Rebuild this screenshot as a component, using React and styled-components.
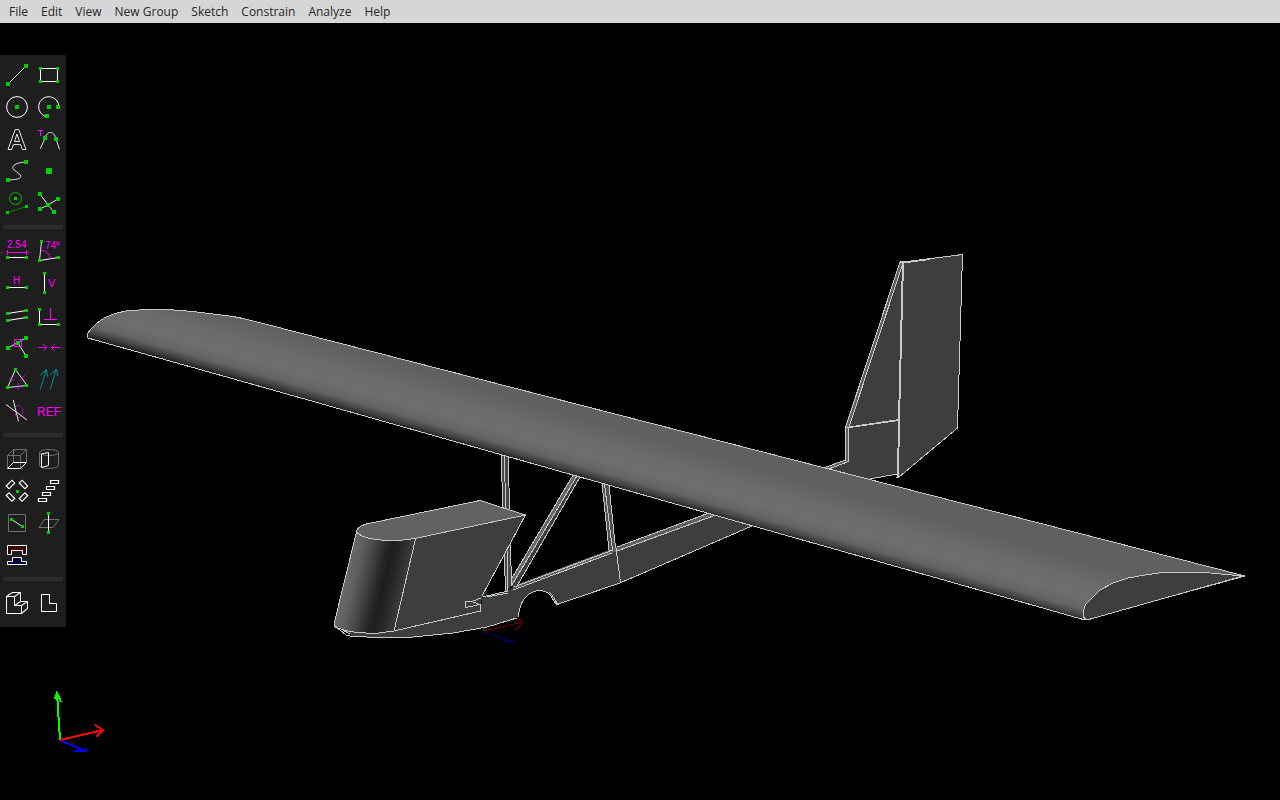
import React from "react";
import styled, { createGlobalStyle } from "styled-components";

const GlobalStyle = createGlobalStyle`
  * { box-sizing: border-box; }
  body { margin: 0; background: #000; }
`;

const Page = styled.div`
  display: flex;
  flex-direction: column;
  min-height: 100vh;
  background: #000;
  font-family: "Open Sans", "Noto Sans", sans-serif;
`;

const MenuBar = styled.nav`
  display: flex;
  flex-wrap: wrap;
  padding: 0 3px;
  background: #d6d6d6;
`;

const MenuButton = styled.button`
  height: 23px;
  padding: 0 7px 0 6px;
  border: 0;
  background: transparent;
  color: #262626;
  font: 12px/23px "Open Sans", "Noto Sans", sans-serif;
  white-space: nowrap;
`;

const Viewport = styled.main`
  flex: 1;
  display: grid;
  grid-template: minmax(0, 1fr) / minmax(0, 1fr);
  & > * { grid-area: 1 / 1; }
`;

const Model = styled.svg`
  width: 100%;
  height: 100%;
`;

const Triad = styled.svg`
  place-self: end start;
  width: 60px;
  height: 75px;
  margin: 0 0 40px 50px;
`;

const Toolbar = styled.aside`
  place-self: start;
  margin-top: 32px;
  padding: 4px 1px 8px;
  background: #1e1e1e;
`;

const ToolGroup = styled.div`
  display: grid;
  grid-template-columns: 32px 32px;
  grid-auto-rows: 32px;
`;

const Divider = styled.hr`
  height: 4px;
  margin: 6px 2px;
  border: 0;
  background: #2c2c2c;
`;

const ToolButton = styled.button`
  width: 32px;
  height: 32px;
  padding: 0;
  border: 0;
  background: transparent;
`;

const Icon = styled.svg`
  display: block;
  width: 32px;
  height: 32px;
  fill: none;
  stroke: #fff;
  stroke-width: 1;
  text {
    fill: #f0f;
    stroke: none;
    font-family: "Liberation Sans", sans-serif;
  }
`;

const M = "#f0f";
const GREEN = "#00d000";
const GRAY = "#707070";
const SOFT = "#e4e4e4";
const LIGHT = "#c8c8c8";
const FACE = "#3e3e3e";

const Dots = ({ at, size = 3 }) =>
  at.map(([x, y]) => (
    <rect key={`${x},${y}`} x={x - size / 2} y={y - size / 2} width={size} height={size} fill={GREEN} stroke="none" />
  ));

const sketchTools = [
  ["Line segment", <><path stroke={SOFT} d="M7 25L25 7" /><Dots size={4} at={[[7, 25], [25, 7]]} /></>],
  ["Rectangle", <><path d="M7.5 9.5H24.5V22.5H7.5Z" /><Dots at={[[7.5, 9.5], [24.5, 9.5], [7.5, 22.5], [24.5, 22.5]]} /></>],
  ["Circle", <><circle cx="16" cy="16" r="10.4" /><Dots size={4} at={[[16, 16]]} /></>],
  ["Arc", <><path d="M26 16A10.2 10.2 0 1 0 14 25.9" /><Dots size={4} at={[[16, 16], [25, 16], [14, 25]]} /></>],
  ["Text", <path stroke={SOFT} d="M14.2 6.5H17.8L25 26.5H21.3L19.6 21.6H12.4L10.7 26.5H7ZM16 11L13.5 18.5H18.5Z" />],
  ["Tangent arc", <><path stroke={M} d="M5 7.5H10M7.5 7.5V13" /><path stroke={SOFT} d="M7.3 25.5L12 15.5C13 11.5 15 9.5 17.5 9.5C20.3 9.5 22.2 12 23 16L26.5 26.5" /><Dots size={4} at={[[12, 15], [23, 16]]} /></>],
  ["Bezier cubic spline", <><path stroke={SOFT} d="M25 7C17 7.5 12.3 9.5 11.8 12.3C11.5 16 19.7 17.5 19.7 21.5C19.5 24 15.5 24.5 7 25" /><Dots size={4} at={[[7, 25], [25, 7]]} /></>],
  ["Point", <Dots size={6} at={[[16, 16]]} />],
  ["Construction", <><circle cx="14.5" cy="11.5" r="6" stroke="#00c000" /><path stroke="#008800" d="M6.5 25.5L25.5 19.5" /><Dots at={[[14.5, 11.5], [6.5, 25.5], [25.5, 19.5]]} /></>],
  ["Split curves", <><path stroke={SOFT} d="M7 7L15 18L21 25M7 22L15 18L25 12" /><Dots size={4} at={[[7, 7], [25, 12], [7, 22], [21, 25], [15, 18]]} /></>],
];

const constraintTools = [
  ["Distance", <><text x="6" y="13" fontSize="10">2.54</text><path stroke={M} d="M6.5 15V20M25.5 15V20M6 17.5H26" /><path d="M6 22.5H26" /><Dots at={[[6.5, 22.5], [25.5, 22.5]]} /></>],
  ["Angle", <><path stroke={SOFT} d="M8.5 6.5L6.5 25.5" /><path d="M6.5 25.5L25.5 22.5" /><path stroke={M} d="M8 15.5C13 15.5 17 19 17.5 24" /><text x="12" y="14" fontSize="10">74</text><circle cx="25" cy="8.5" r="1.5" stroke={M} /><Dots at={[[8.5, 6.5], [6.5, 25.5], [25.5, 22.5]]} /></>],
  ["Horizontal", <><text x="12" y="17" fontSize="10">H</text><path d="M6 20.5H26" /><Dots at={[[6.5, 20.5], [25.5, 20.5]]} /></>],
  ["Vertical", <><path d="M11.5 6V26" /><text x="15" y="20" fontSize="11">V</text><Dots at={[[11.5, 6.5], [11.5, 25.5]]} /></>],
  ["Parallel", <><path d="M6.5 14.5L25.5 11.5M6.5 21.5L25.5 18.5" /><Dots at={[[6.5, 14.5], [25.5, 11.5], [6.5, 21.5], [25.5, 18.5]]} /></>],
  ["Perpendicular", <><path d="M6.5 10V25.5H26" /><path stroke={M} d="M17.5 9V20.5M11 20.5H24" /><Dots at={[[6.5, 10.5], [6.5, 25.5], [25.5, 25.5]]} /></>],
  ["Point on curve", <><path stroke={SOFT} d="M7 17L25 7M17 12L25 25" /><rect x="13.5" y="8.5" width="7" height="7" stroke={M} /><Dots size={4} at={[[7, 17], [25, 7], [25, 25], [17, 12]]} /></>],
  ["Symmetric", <path stroke={M} strokeWidth="0.9" d="M5 16.5H13.5M10 13L13.5 16.5L10 20M27 16.5H18.5M22 13L18.5 16.5L22 20" />],
  ["Equal", <><path d="M14.5 6.5L6.5 24.5L26 22.5Z" stroke={SOFT} /><path stroke="#d800d8" d="M8 14.7L13.5 17.5M18.5 17L24 12.3M17.2 20V27" /><Dots at={[[14.5, 6.5], [6.5, 24.5], [25.5, 22.5]]} /></>],
  ["Same orientation", <path stroke="#009090" d="M7.3 26.5L13.3 6.5M7.5 12L13.3 6.5L14.8 14M17.3 26.5L23.3 6M17.5 12L23.3 6L24.8 13" />],
  ["Other angle", <><path stroke="#b800b8" d="M13 12C18 8.5 22.5 12 21.8 17C21.3 21 19 22.8 17 22.8M14.5 18V21" /><path stroke={SOFT} d="M5 9.5L26 25M12.3 5L17.5 26.5" /></>],
  ["Reference", <text x="4" y="21" fontSize="12">REF</text>],
];

const groupTools = [
  ["Sketch in 3D", <><path stroke={GRAY} d="M6.5 25V12.5H19.5V25M6.5 12.5L12.5 6.5H25.5L19.5 12.5M25.5 6.5V19M12.5 6.5V19" /><path d="M6.5 25.5H19.5L25.5 19.5H12.5Z" /></>],
  ["Revolve", <><path stroke={GRAY} d="M6.5 9.5V22.5M25.5 9.5V22.5" /><ellipse stroke={GRAY} cx="16" cy="9.5" rx="9.5" ry="3" /><path stroke={GRAY} d="M6.5 22.5C8 26.5 24 26.5 25.5 22.5" /><path d="M8.5 24.5V11L15.5 9.5V22.5L8.5 24.5" /></>],
  ["Step rotating", <>{[[9.5, 9.5, -45], [22.5, 9.5, 45], [9.5, 22, 45], [22.5, 22, -45]].map(([x, y, a]) => <rect key={`${x}${y}`} x="-4" y="-2" width="8" height="4" strokeWidth="1.2" transform={`translate(${x} ${y}) rotate(${a})`} />)}<Dots at={[[16.5, 16.5]]} /></>],
  ["Step translating", <path strokeWidth="1.2" d="M17.5 5.5h8v3h-8zM13.5 11.5h8v3h-8zM9.5 17.5h8v3h-8zM5.5 23.5h8v3h-8z" />],
  ["Sketch in workplane", <><path stroke={GRAY} d="M7.5 7.5H24.5V24.5H7.5Z" /><path stroke={SOFT} d="M10.5 12.5L21.5 19.5" /><Dots at={[[10.5, 12.5], [21.5, 19.5]]} /></>],
  ["Nearest workplane", <><path stroke={GRAY} d="M6 20.5L11.5 12.5H26L20 20.5Z" /><path d="M15.5 6V26" /><Dots at={[[15.5, 6.5], [15.5, 25.5]]} /></>],
  ["Assemble", <><path fill="#400000" d="M6.5 6.5H25.5V15.5H21.5V11.5H10.5V15.5H6.5Z" /><path fill="#000040" d="M6.5 25.5V22.5H11.5V18.5H20.5V22.5H25.5V25.5Z" /></>],
];

const viewTools = [
  ["Extrude", <><path stroke={SOFT} strokeWidth="1.2" d="M5.5 9.5L11.5 5.5M13.5 9.5L19.5 5.5M13.5 18.5L19.5 14.5M20.5 18.5L26.5 14.5M20.5 26.5L26.5 21.5" /><path d="M5.5 9.5H13.5V18.5H20.5V26.5H5.5ZM11 5.5H19.5V14.5H26.5V22" /></>],
  ["Flat outline", <path d="M8.5 7.5H16.5V16.5H23.5V24.5H8.5Z" />],
];

const Tools = ({ items }) => (
  <ToolGroup>
    {items.map(([name, drawing]) => (
      <ToolButton key={name} type="button" aria-label={name}>
        <Icon viewBox="0 0 32 32" aria-hidden="true">{drawing}</Icon>
      </ToolButton>
    ))}
  </ToolGroup>
);

const Glider = () => (
  <Model viewBox="0 23 1280 777" role="img" aria-label="Shaded glider model" shapeRendering="crispEdges" fill="none" stroke={LIGHT} strokeWidth="1">
    <defs>
      <linearGradient id="wing" gradientUnits="userSpaceOnUse" x1="600" y1="483" x2="622" y2="406">
        <stop offset="0" stopColor="#222" />
        <stop offset="0.06" stopColor="#444" />
        <stop offset="0.14" stopColor="#636363" />
        <stop offset="0.26" stopColor="#6e6e6e" />
        <stop offset="0.5" stopColor="#6b6b6b" />
        <stop offset="0.72" stopColor="#606060" />
        <stop offset="1" stopColor="#606060" />
      </linearGradient>
      <linearGradient id="nose" gradientUnits="userSpaceOnUse" x1="345" y1="580" x2="401" y2="593">
        <stop offset="0" stopColor="#686868" />
        <stop offset="0.15" stopColor="#606060" />
        <stop offset="0.35" stopColor="#484848" />
        <stop offset="0.55" stopColor="#282828" />
        <stop offset="0.68" stopColor="#1e1e1e" />
        <stop offset="0.85" stopColor="#2a2a2a" />
        <stop offset="1" stopColor="#3a3a3a" />
      </linearGradient>
    </defs>

    {/* tail */}
    <g>
      <path stroke="none" fill={FACE} d="M903 262L963 254L957 428L899 477L896 474L870 479L826 469L848 461L845 427L900 262Z" />
      <path stroke="none" fill="#606060" d="M900 262L903 264L849 427V461L829 469L825 467L845 460V427Z" />
      <path d="M903 262L962.5 254.5L957.5 428L899 477H896M900 262L845.5 427.5V460L825 467.5M902 266L849 427M848.5 427V461.5L829 469M845 427.5H849M870 479L897 474" />
      <path strokeWidth="2" d="M900 262H903L901 340L899 420L898 477" />
      <path d="M903 262L963 254.5M903 263L930 259.5M849 427.5L899 420.5M849 427L899 419.5" />
    </g>

    {/* fuselage */}
    <path stroke="none" fill={FACE} d="M340 629L352 636L367 637L413 637L453 633L487 627L518 617C519 600 529 590 540 590C552 591 552 601 557 604L620 583L752 526L709 514L617 548L512 588L505 592L483 597L480 611L394 631L357 633L335 627Z" />
    <path stroke="none" fill="#606060" d="M709 513L617 547L513 586V589L617 551L716 515Z" />
    <path d="M334 625L341 631L347 635.5L352 636.5L367 637H413L453 633L487 627L518.5 617.5C519 600 529 590.5 540 590.5C552 591 552 601 557 604.5L620 583L752 526" />
    <path d="M341 629L350 634M549 592C554 596 554 600 558 604M709 513L617 547M716 515L617 551M613 550L514 587M612 553L513 590M616 548L620.5 583M482 597L508 591M487 597L508 593" />

    {/* struts */}
    <path stroke="none" fill="#484848" d="M501 455L508 457L512 586L505 592Z" />
    <path d="M501 455L503 508L505.5 592M504 456L506 508L508 592M508.5 457L510 545L512 586" />
    <path stroke="none" fill="#686868" d="M573 475L577 476L512 585V578Z" />
    <path stroke="none" fill={FACE} d="M577 476L580 477L517 586H512Z" />
    <path d="M573 475L512 578M577 476L512 585M580 477L517 586M511.5 585V578" />
    <path stroke="none" fill="#505050" d="M602 483L609 485L615 548L609 550Z" />
    <path d="M602 483L609 550M604.5 484L612.5 550M609 485L615.5 548M609 550H613" />

    {/* wing */}
    <path fill="url(#wing)" d="M1245 576L300 333L263 323.5L243 318.5L233 316.5L213 314L193 311.5L168 309.5H150L128 310.5L115 313.5L105 317.5L97 323L90 330L87.5 334L88 338L271 389.5L1085 620Z" />
    <path fill={FACE} d="M1087 620L1083 617V611L1086 604L1100 590L1113 583L1128 578L1145 575L1163 572.5H1205L1243 576Z" />

    {/* cockpit pod */}
    <path stroke="none" fill="url(#nose)" d="M357 532L415 538L394 631L375 633L357 632L345 630L334 625Z" />
    <path stroke="none" fill={FACE} d="M415 538L526 515L482 596L480 611L394 631Z" />
    <path fill="#626262" d="M480 500.5L525.5 515L415 538.5C395 542 366 541 357.5 533C354 529 362 524.5 371 523Z" />
    <path d="M356.5 532L334 624L335 627L345 630.5L357 632.5L375 633.5L394 631L480.5 611V605L472 601.5H465.5V607.5L471 606.5L481 604M415.5 539L394 631M525.5 515L482 596M472 601.5L481 598" />

    {/* origin axes */}
    <path stroke="#007000" d="M483.5 631V628M482 597L486 592" />
    <path stroke="#700000" d="M484 631L523 622M517 617L523 622L515 631" />
    <path stroke="#000078" d="M484 632L513 642M502 641.5H513V638" />
  </Model>
);

const AxisTriad = () => (
  <Triad viewBox="50 685 60 75" role="img" aria-label="Axes" shapeRendering="crispEdges" fill="none" strokeWidth="2">
    <path stroke="#00f" d="M60 740L85 751M74 751H86V748" />
    <path stroke="#0f0" d="M60 740L57 693M55 699L57 693L61 702" />
    <path stroke="#f00" d="M60 740L103 730M95 725L103 730L96 737" />
  </Triad>
);

const menus = ["File", "Edit", "View", "New Group", "Sketch", "Constrain", "Analyze", "Help"];

export default function App() {
  return (
    <Page>
      <GlobalStyle />
      <MenuBar aria-label="Main menu">
        {menus.map((m) => <MenuButton key={m} type="button">{m}</MenuButton>)}
      </MenuBar>
      <Viewport>
        <Glider />
        <AxisTriad />
        <Toolbar aria-label="Tools">
          <Tools items={sketchTools} />
          <Divider />
          <Tools items={constraintTools} />
          <Divider />
          <Tools items={groupTools} />
          <Divider />
          <Tools items={viewTools} />
        </Toolbar>
      </Viewport>
    </Page>
  );
}
